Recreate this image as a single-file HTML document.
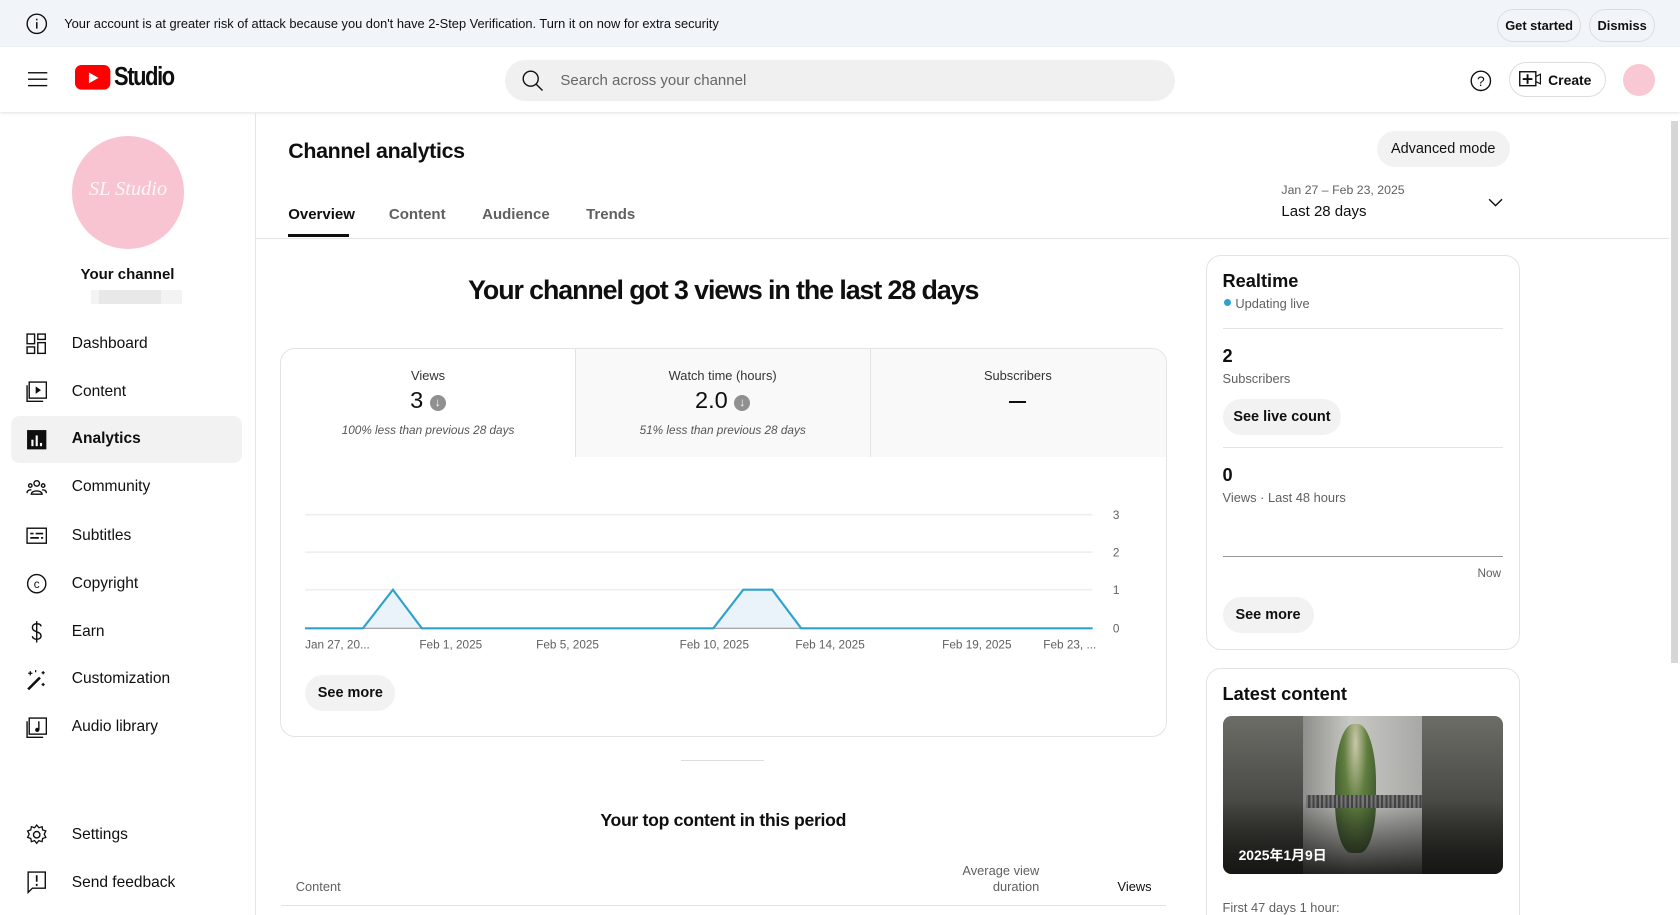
<!DOCTYPE html>
<html><head><meta charset="utf-8"><style>
*{box-sizing:border-box;margin:0;padding:0}
html,body{width:1680px;height:915px;overflow:hidden;background:#fff}
#w{zoom:1.0714286;width:1568px;height:854px;position:relative;font-family:"Liberation Sans","Noto Sans CJK JP",sans-serif;color:#0f0f0f;overflow:hidden}
.a{position:absolute}
.btn{position:absolute;background:#f2f2f2;border-radius:18px;font-weight:bold;font-size:14px;display:flex;align-items:center;justify-content:center}
.ob{position:absolute;border:1px solid #ddd;border-radius:18px;font-size:12px;font-weight:bold;display:flex;align-items:center;justify-content:center;background:transparent}
.nav{position:absolute;left:10px;width:216px;height:44px;display:flex;align-items:center;font-size:14.5px}
.nav svg{position:absolute;left:14px}
.nav span{position:absolute;left:57px}
.g{color:#606060}
</style></head><body><div id="w">
<div class="a" style="left:0;top:0;width:1568px;height:44px;background:#f1f5f9"></div>
<svg class="a" style="left:23px;top:11px" width="22" height="22" viewBox="0 0 22 22"><circle cx="11" cy="11" r="9" fill="none" stroke="#0f0f0f" stroke-width="1.3"/><rect x="10.3" y="9.5" width="1.4" height="6" fill="#0f0f0f"/><rect x="10.3" y="6.3" width="1.4" height="1.5" fill="#0f0f0f"/></svg>
<div class="a" style="left:60px;top:15px;font-size:12px">Your account is at greater risk of attack because you don't have 2-Step Verification. Turn it on now for extra security</div>
<div class="ob" style="left:1397px;top:8px;width:79px;height:31px">Get started</div>
<div class="ob" style="left:1483px;top:8px;width:62px;height:31px">Dismiss</div>
<div class="a" style="left:0;top:44px;width:1568px;height:61px;background:#fff;box-shadow:0 1px 3px rgba(0,0,0,.12)"></div>
<svg class="a" style="left:26px;top:66px" width="20" height="16"><rect y="1" width="18" height="1.3" fill="#0f0f0f"/><rect y="7" width="18" height="1.3" fill="#0f0f0f"/><rect y="13" width="18" height="1.3" fill="#0f0f0f"/></svg>
<svg class="a" style="left:70px;top:61px" width="34" height="24"><rect width="33" height="23" rx="6" fill="#f00"/><path d="M13 7l9 5-9 5z" fill="#fff"/></svg>
<div class="a" style="left:106px;top:59px;font-size:24px;font-weight:bold;letter-spacing:-1.5px;transform:scaleX(.85);transform-origin:0 0">Studio</div>
<div class="a" style="left:471px;top:56px;width:626px;height:38px;background:#f0f0f0;border-radius:19px"></div>
<svg class="a" style="left:485px;top:63px" width="24" height="24"><circle cx="10" cy="10" r="7" fill="none" stroke="#0f0f0f" stroke-width="1.3"/><path d="M15 15l6 6" stroke="#0f0f0f" stroke-width="1.3"/></svg>
<div class="a g" style="left:523px;top:67px;font-size:14px;color:#666">Search across your channel</div>
<svg class="a" style="left:1370px;top:63px" width="24" height="24"><circle cx="12" cy="12" r="9" fill="none" stroke="#0f0f0f" stroke-width="1.3"/><text x="12" y="17" font-size="13" text-anchor="middle" font-family="Liberation Sans" fill="#0f0f0f">?</text></svg>
<div class="ob" style="left:1408px;top:58px;width:91px;height:33px;font-size:13px;justify-content:flex-start;padding-left:36px">Create</div>
<svg class="a" style="left:1418px;top:66px" width="22" height="16"><rect x=".7" y=".7" width="15" height="13" fill="none" stroke="#0f0f0f" stroke-width="1.3"/><path d="M8 3v9M3.5 7.5h9" stroke="#0f0f0f" stroke-width="1.8"/><path d="M16 5l4-2v9l-4-2" fill="none" stroke="#0f0f0f" stroke-width="1.1"/></svg>
<div class="a" style="left:1515px;top:60px;width:30px;height:30px;border-radius:50%;background:#f8c8d4"></div>
<div class="a" style="left:238px;top:105px;width:1px;height:749px;background:#e5e5e5"></div>
<div class="a" style="left:67px;top:127px;width:105px;height:105px;border-radius:50%;background:#f9c4d2"></div>
<div class="a" style="left:67px;top:166px;width:105px;text-align:center;color:#fff;font-family:'Liberation Serif',serif;font-style:italic;font-size:19px;opacity:.85">SL Studio</div>
<div class="a" style="left:0;top:248px;width:238px;text-align:center;font-size:14px;font-weight:bold">Your channel</div>
<div class="a" style="left:85px;top:271px;width:85px;height:13px;background:#f3f3f3"></div>
<div class="a" style="left:92px;top:271px;width:58px;height:13px;background:#e8e8e8"></div>
<div class="nav" style="top:299px"><svg width="20" height="20"><g fill="none" stroke="#0f0f0f" stroke-width="1.3"><rect x="1" y="1" width="7" height="9"/><rect x="11" y="1" width="7" height="5"/><rect x="1" y="13" width="7" height="6"/><rect x="11" y="9" width="7" height="10"/></g></svg><span>Dashboard</span></div>
<div class="nav" style="top:344px"><svg width="20" height="20"><g fill="none" stroke="#0f0f0f" stroke-width="1.3"><rect x="3" y="1" width="16" height="15"/><path d="M1 4v15h15"/></g><path d="M9 5l5 3.5-5 3.5z" fill="#0f0f0f"/></svg><span>Content</span></div>
<div class="nav" style="top:388px;background:#f2f2f2;border-radius:8px;font-weight:bold"><svg width="20" height="20"><rect x="1" y="1" width="18" height="18" fill="#0f0f0f"/><rect x="5" y="10" width="2" height="6" fill="#fff"/><rect x="9" y="6" width="2" height="10" fill="#fff"/><rect x="13" y="13" width="2" height="3" fill="#fff"/></svg><span>Analytics</span></div>
<div class="nav" style="top:433px"><svg width="20" height="20"><g fill="none" stroke="#0f0f0f" stroke-width="1.3"><circle cx="10" cy="6" r="2.6"/><path d="M5 16c0-4 10-4 10 0z"/><circle cx="4" cy="8" r="1.6"/><circle cx="16" cy="8" r="1.6"/><path d="M1 15c0-3 3-3 4-3M19 15c0-3-3-3-4-3"/></g></svg><span>Community</span></div>
<div class="nav" style="top:478px"><svg width="20" height="20"><rect x="1" y="3" width="18" height="14" fill="none" stroke="#0f0f0f" stroke-width="1.3"/><path d="M4 8h3M9 8h7M4 12h8M14 12h2" stroke="#0f0f0f" stroke-width="1.6"/></svg><span>Subtitles</span></div>
<div class="nav" style="top:523px"><svg width="20" height="20"><circle cx="10" cy="10" r="8.5" fill="none" stroke="#0f0f0f" stroke-width="1.3"/><text x="10" y="14" font-size="11" text-anchor="middle" font-family="Liberation Sans" fill="#0f0f0f">c</text></svg><span>Copyright</span></div>
<div class="nav" style="top:568px"><svg width="20" height="22"><path d="M10 1v20M14 6c0-2-2-2.5-4-2.5S6 4.5 6 7c0 5 8 3 8 8 0 2-2 3-4 3s-4-1-4-3" fill="none" stroke="#0f0f0f" stroke-width="1.3"/></svg><span>Earn</span></div>
<div class="nav" style="top:612px"><svg width="20" height="20"><path d="M2 19L13 8" stroke="#0f0f0f" stroke-width="2.4"/><path d="M4 2v4M2 4h4M16 2v3M14.5 3.5h3M16 13v3M14.5 14.5h3M9 1v2" stroke="#0f0f0f" stroke-width="1.2"/></svg><span>Customization</span></div>
<div class="nav" style="top:657px"><svg width="20" height="20"><g fill="none" stroke="#0f0f0f" stroke-width="1.3"><rect x="3" y="1" width="16" height="15"/><path d="M1 4v15h15"/></g><path d="M12 4v8" stroke="#0f0f0f" stroke-width="1.3"/><circle cx="10.5" cy="12" r="2" fill="#0f0f0f"/></svg><span>Audio library</span></div>
<div class="nav" style="top:757px"><svg width="20" height="20"><circle cx="10" cy="10" r="3" fill="none" stroke="#0f0f0f" stroke-width="1.3"/><path d="M10 1l2 2.5 3-1 .5 3 3 1-1.5 3 1.5 3-3 1-.5 3-3-1-2 2.5-2-2.5-3 1-.5-3-3-1 1.5-3-1.5-3 3-1 .5-3 3 1z" fill="none" stroke="#0f0f0f" stroke-width="1.2"/></svg><span>Settings</span></div>
<div class="nav" style="top:802px"><svg width="20" height="22"><path d="M2 1h16v15H6l-4 4z" fill="none" stroke="#0f0f0f" stroke-width="1.3"/><path d="M10 4v6M10 12v2" stroke="#0f0f0f" stroke-width="1.6"/></svg><span>Send feedback</span></div>
<div class="a" style="left:269px;top:130px;font-size:20px;font-weight:bold;letter-spacing:-.3px">Channel analytics</div>
<div class="btn" style="left:1285px;top:122px;width:124px;height:34px;font-weight:normal;font-size:13.5px;color:#0f0f0f">Advanced mode</div>
<div class="a" style="left:269px;top:192px;font-size:14px;font-weight:bold">Overview</div>
<div class="a" style="left:269px;top:218px;width:57px;height:3px;background:#0f0f0f"></div>
<div class="a g" style="left:363px;top:192px;font-size:14px;font-weight:bold">Content</div>
<div class="a g" style="left:450px;top:192px;font-size:14px;font-weight:bold">Audience</div>
<div class="a g" style="left:547px;top:192px;font-size:14px;font-weight:bold">Trends</div>
<div class="a g" style="left:1196px;top:171px;font-size:11.5px">Jan 27 – Feb 23, 2025</div>
<div class="a" style="left:1196px;top:189px;font-size:14px">Last 28 days</div>
<svg class="a" style="left:1388px;top:183px" width="16" height="12"><path d="M2 3l6 6 6-6" fill="none" stroke="#0f0f0f" stroke-width="1.3"/></svg>
<div class="a" style="left:239px;top:222px;width:1319px;height:1px;background:#e5e5e5"></div>
<div class="a" style="left:262px;top:257px;width:826px;text-align:center;font-size:25px;font-weight:bold;letter-spacing:-1px">Your channel got 3 views in the last 28 days</div>
<div class="a" style="left:261px;top:325px;width:828px;height:363px;border:1px solid #e3e3e3;border-radius:14px;overflow:hidden">
<div class="a" style="left:275px;top:0;width:553px;height:101px;background:#f9f9f9"></div>
<div class="a" style="left:275px;top:0;width:1px;height:101px;background:#e3e3e3"></div>
<div class="a" style="left:550px;top:0;width:1px;height:101px;background:#e3e3e3"></div>
</div>
<div class="a" style="left:262px;top:343px;width:275px;text-align:center;font-size:12px;color:#333">Views</div>
<div class="a" style="left:262px;top:361px;width:275px;text-align:center;font-size:22px">3 <span style="display:inline-block;width:15px;height:15px;border-radius:50%;background:#909090;vertical-align:2px;color:#fff;font-size:11px;line-height:15px;font-weight:bold">↓</span></div>
<div class="a" style="left:262px;top:396px;width:275px;text-align:center;font-size:11px;font-style:italic;color:#555">100% less than previous 28 days</div>
<div class="a" style="left:537px;top:343px;width:275px;text-align:center;font-size:12px;color:#333">Watch time (hours)</div>
<div class="a" style="left:537px;top:361px;width:275px;text-align:center;font-size:22px">2.0 <span style="display:inline-block;width:15px;height:15px;border-radius:50%;background:#909090;vertical-align:2px;color:#fff;font-size:11px;line-height:15px;font-weight:bold">↓</span></div>
<div class="a" style="left:537px;top:396px;width:275px;text-align:center;font-size:11px;font-style:italic;color:#555">51% less than previous 28 days</div>
<div class="a" style="left:812px;top:343px;width:276px;text-align:center;font-size:12px;color:#333">Subscribers</div>
<div class="a" style="left:942px;top:374px;width:16px;height:2px;background:#0f0f0f"></div>
<svg class="a" style="left:270px;top:470px" width="800" height="145">
<g stroke="#eee" stroke-width="1.5"><line x1="15" y1="10" x2="750" y2="10"/><line x1="15" y1="45" x2="750" y2="45"/><line x1="15" y1="80" x2="750" y2="80"/></g>
<path d="M69 116L97 80L124 116ZM396 116L424 80L451 80L478 116Z" fill="#e9f3f9"/>
<line x1="15" y1="116" x2="750" y2="116" stroke="#999" stroke-width="1"/>
<path d="M15 116H69L97 80L124 116H396L424 80H451L478 116H750" fill="none" stroke="#2ea2cc" stroke-width="2"/>
<g font-family="Liberation Sans" font-size="11" fill="#606060"><text x="769" y="14">3</text><text x="769" y="49">2</text><text x="769" y="84">1</text><text x="769" y="120">0</text>
<text x="15" y="135">Jan 27, 20...</text><text x="151" y="135" text-anchor="middle">Feb 1, 2025</text><text x="260" y="135" text-anchor="middle">Feb 5, 2025</text><text x="397" y="135" text-anchor="middle">Feb 10, 2025</text><text x="505" y="135" text-anchor="middle">Feb 14, 2025</text><text x="642" y="135" text-anchor="middle">Feb 19, 2025</text><text x="704" y="135">Feb 23, ...</text></g>
</svg>
<div class="btn" style="left:285px;top:630px;width:84px;height:34px;font-size:13.5px">See more</div>
<div class="a" style="left:636px;top:709px;width:77px;height:1px;background:#ddd"></div>
<div class="a" style="left:262px;top:756px;width:826px;text-align:center;font-size:16.5px;font-weight:bold;letter-spacing:-.3px">Your top content in this period</div>
<div class="a g" style="left:276px;top:820px;font-size:12px">Content</div>
<div class="a g" style="left:880px;top:805px;width:90px;text-align:right;font-size:12px;line-height:15px">Average view<br>duration</div>
<div class="a" style="left:1043px;top:820px;font-size:12px">Views</div>
<div class="a" style="left:262px;top:845px;width:826px;height:1px;background:#e3e3e3"></div>
<div class="a" style="left:1126px;top:238px;width:293px;height:369px;border:1px solid #e3e3e3;border-radius:14px"></div>
<div class="a" style="left:1141px;top:253px;font-size:17px;font-weight:bold">Realtime</div>
<div class="a" style="left:1142px;top:279px;width:7px;height:7px;border-radius:50%;background:#2ea2cc"></div>
<div class="a g" style="left:1153px;top:276px;font-size:12px">Updating live</div>
<div class="a" style="left:1141px;top:306px;width:262px;height:1px;background:#e3e3e3"></div>
<div class="a" style="left:1141px;top:323px;font-size:17px;font-weight:bold">2</div>
<div class="a g" style="left:1141px;top:346px;font-size:12px">Subscribers</div>
<div class="btn" style="left:1141px;top:372px;width:111px;height:34px;font-size:13.5px">See live count</div>
<div class="a" style="left:1141px;top:417px;width:262px;height:1px;background:#e3e3e3"></div>
<div class="a" style="left:1141px;top:434px;font-size:17px;font-weight:bold">0</div>
<div class="a g" style="left:1141px;top:457px;font-size:12px">Views · Last 48 hours</div>
<div class="a" style="left:1141px;top:519px;width:262px;height:1px;background:#999"></div>
<div class="a g" style="left:1379px;top:529px;font-size:11px">Now</div>
<div class="btn" style="left:1141px;top:557px;width:85px;height:34px;font-size:13.5px">See more</div>
<div class="a" style="left:1126px;top:623px;width:293px;height:260px;border:1px solid #e3e3e3;border-radius:14px"></div>
<div class="a" style="left:1141px;top:638px;font-size:17px;font-weight:bold">Latest content</div>
<div class="a" style="left:1141px;top:668px;width:262px;height:148px;border-radius:8px;overflow:hidden;background:linear-gradient(180deg,#6d6d68,#2a2a27)">
<div class="a" style="left:75px;top:0;width:111px;height:148px;background:linear-gradient(90deg,#8e8e8a,#c8c8c5 40%,#a8a8a5)"></div>
<div class="a" style="left:105px;top:8px;width:38px;height:120px;border-radius:45% 45% 40% 40%;background:radial-gradient(ellipse at 50% 15%,#c9c7a8,#5f7e3e 40%,#33492a)"></div>
<div class="a" style="left:78px;top:74px;width:108px;height:12px;background:repeating-linear-gradient(90deg,#777 0 2px,#444 2px 4px)"></div>
<div class="a" style="left:0;top:80px;width:262px;height:68px;background:linear-gradient(180deg,transparent,rgba(20,20,18,.9))"></div>
<div class="a" style="left:15px;top:121px;color:#fff;font-size:13px;font-weight:bold">2025年1月9日</div>
</div>
<div class="a g" style="left:1141px;top:840px;font-size:12px">First 47 days 1 hour:</div>
<div class="a" style="left:1560px;top:113px;width:6px;height:506px;background:#d6d6d6"></div>
</div></body></html>
